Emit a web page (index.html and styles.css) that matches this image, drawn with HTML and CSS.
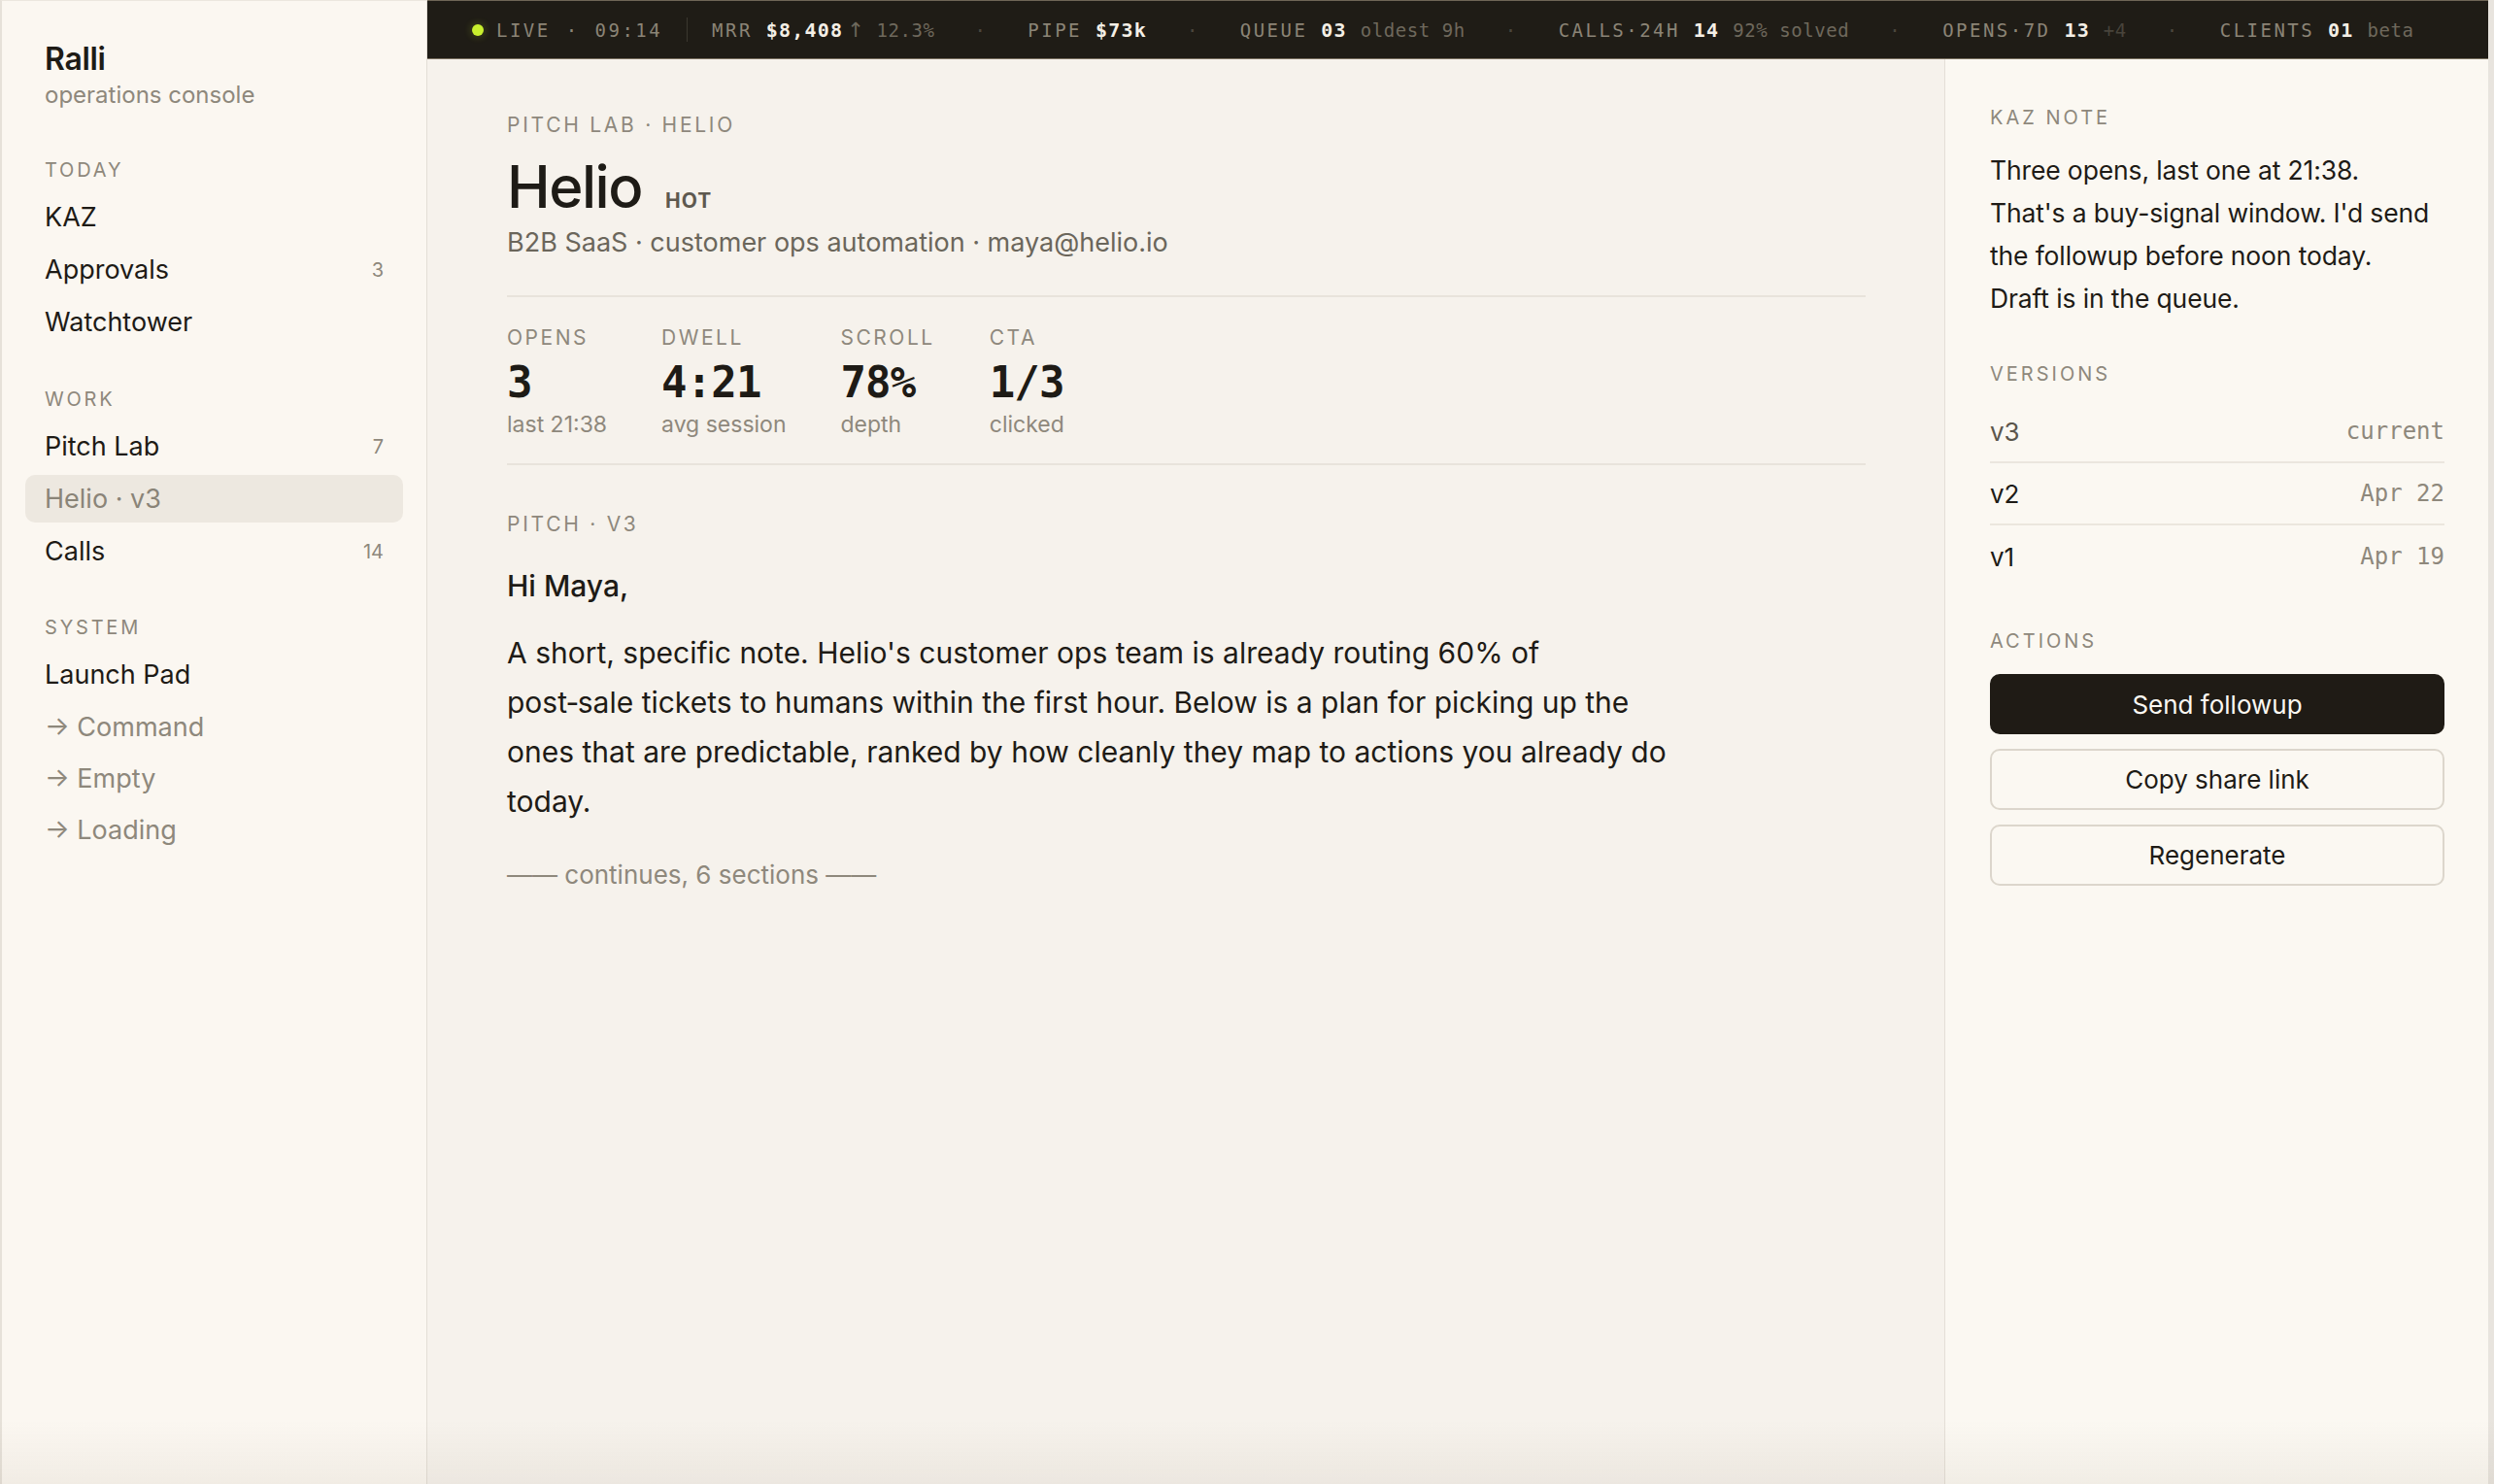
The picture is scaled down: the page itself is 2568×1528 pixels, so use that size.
FILE: index.html
```html
<!DOCTYPE html>
<html lang="en">
<head>
    <meta charset="UTF-8">
    <title>Ralli · Helio</title>
    <link rel="stylesheet" href="styles.css">
</head>
<body>
<aside class="sidebar">
    <div class="brand">
        <div class="brand_name">Ralli</div>
        <div class="brand_sub">operations console</div>
    </div>
    <div class="nav_group">
        <div class="nav_label">TODAY</div>
        <a href="###" class="nav_item"><span>KAZ</span></a>
        <a href="###" class="nav_item"><span>Approvals</span><span class="nav_count">3</span></a>
        <a href="###" class="nav_item"><span>Watchtower</span></a>
    </div>
    <div class="nav_group">
        <div class="nav_label">WORK</div>
        <a href="###" class="nav_item"><span>Pitch Lab</span><span class="nav_count">7</span></a>
        <a href="###" class="nav_item active"><span>Helio · v3</span></a>
        <a href="###" class="nav_item"><span>Calls</span><span class="nav_count">14</span></a>
    </div>
    <div class="nav_group">
        <div class="nav_label">SYSTEM</div>
        <a href="###" class="nav_item"><span>Launch Pad</span></a>
        <a href="###" class="nav_item sub"><span>→ Command</span></a>
        <a href="###" class="nav_item sub"><span>→ Empty</span></a>
        <a href="###" class="nav_item sub"><span>→ Loading</span></a>
    </div>
</aside>

<div class="workspace">
    <div class="ticker">
        <span class="tick_live"><i class="live_dot"></i>LIVE<span class="tick_mid">·</span>09:14</span>
        <span class="tick_rule"></span>
        <span class="tick">MRR <b>$8,408</b><em class="tick_up"><span class="arrow">↑</span> 12.3%</em></span>
        <span class="tick_sep">·</span>
        <span class="tick">PIPE <b>$73k</b></span>
        <span class="tick_sep">·</span>
        <span class="tick">QUEUE <b>03</b> <em>oldest 9h</em></span>
        <span class="tick_sep">·</span>
        <span class="tick">CALLS·24H <b>14</b> <em>92% solved</em></span>
        <span class="tick_sep">·</span>
        <span class="tick">OPENS·7D <b>13</b> <em class="tick_faint">+4</em></span>
        <span class="tick_sep">·</span>
        <span class="tick">CLIENTS <b>01</b> <em>beta</em></span>
    </div>

    <div class="panes">
        <main class="main">
            <div class="header">
                <div class="crumb">PITCH LAB · HELIO</div>
                <div class="title_row">
                    <h1>Helio</h1>
                    <span class="heat">HOT</span>
                </div>
                <div class="client_meta">B2B SaaS · customer ops automation · maya@helio.io</div>
            </div>

            <div class="metrics">
                <div class="metric">
                    <div class="metric_label">OPENS</div>
                    <div class="metric_value">3</div>
                    <div class="metric_note">last 21:38</div>
                </div>
                <div class="metric">
                    <div class="metric_label">DWELL</div>
                    <div class="metric_value">4:21</div>
                    <div class="metric_note">avg session</div>
                </div>
                <div class="metric">
                    <div class="metric_label">SCROLL</div>
                    <div class="metric_value">78%</div>
                    <div class="metric_note">depth</div>
                </div>
                <div class="metric">
                    <div class="metric_label">CTA</div>
                    <div class="metric_value">1/3</div>
                    <div class="metric_note">clicked</div>
                </div>
            </div>

            <div class="pitch">
                <div class="crumb">PITCH · V3</div>
                <p class="greeting">Hi Maya,</p>
                <p class="pitch_body">A short, specific note. Helio's customer ops team is already routing 60% of post&#8209;sale&nbsp;tickets to humans within the first hour. Below is a plan for picking up the ones that are predictable, ranked by how cleanly they map to actions you already do today.</p>
                <div class="more">—— continues, 6 sections ——</div>
            </div>
        </main>

        <aside class="aside">
            <div class="aside_label">KAZ NOTE</div>
            <p class="note">Three opens, last one at 21:38.<br>
                That's a buy-signal window. I'd send<br>
                the followup before noon today.<br>
                Draft is in the queue.</p>

            <div class="aside_label aside_gap">VERSIONS</div>
            <ul class="versions">
                <li class="version current"><span>v3</span><span class="version_date">current</span></li>
                <li class="version"><span>v2</span><span class="version_date">Apr 22</span></li>
                <li class="version"><span>v1</span><span class="version_date">Apr 19</span></li>
            </ul>

            <div class="aside_label aside_gap">ACTIONS</div>
            <div class="actions">
                <button class="btn btn_primary">Send followup</button>
                <button class="btn">Copy share link</button>
                <button class="btn">Regenerate</button>
            </div>
        </aside>
    </div>
</div>
</body>
</html>
```

FILE: styles.css
```css
*{
    padding:0;
    margin:0;
    box-sizing: border-box;
}
ul ,li {
    list-style: none;
}
a {
    text-decoration: none;
    color: inherit;
}
html, body {
    height: 100%;
}
body {
    display: flex;
    overflow: hidden;
    font-family: Inter, "Noto Sans", sans-serif;
    color: #1e1b16;
    background: #e8e4de;
    border-right: 6px solid #e8e4de;
}
/* soft shade along the bottom edge of the window */
body::after {
    content: "";
    position: fixed;
    left: 0;
    right: 0;
    bottom: 0;
    height: 66px;
    background: linear-gradient(rgba(90, 70, 40, 0), rgba(90, 70, 40, 0.06));
    pointer-events: none;
}

/* sidebar */
.sidebar {
    flex: none;
    width: 440px;
    padding: 41px 24px 0;
    background: #fbf7f1;
    border-left: 2px solid #e6e1d9;
    border-top: 1px solid #ece7df;
    border-right: 1px solid #e3ded6;
}
.brand {
    padding: 0 20px;
}
.brand_name {
    font-size: 32px;
    font-weight: 600;
    line-height: 38px;
    letter-spacing: -0.01em;
}
.brand_sub {
    margin-top: 3px;
    font-size: 24px;
    line-height: 30px;
    color: #8e887c;
}
.nav_group {
    margin-top: 43px;
}
.brand + .nav_group {
    margin-top: 50px;
}
.nav_group:last-child {
    margin-top: 42px;
}
.nav_label {
    padding: 0 20px;
    margin-bottom: 12px;
    font-size: 20px;
    line-height: 24px;
    letter-spacing: 0.14em;
    color: #8e887c;
}
.nav_item {
    display: flex;
    justify-content: space-between;
    align-items: center;
    height: 49px;
    padding: 0 20px;
    margin-bottom: 5px;
    border-radius: 10px;
    font-size: 27px;
}
.nav_item:last-child {
    margin-bottom: 0;
}
.nav_item.sub {
    margin-bottom: 4px;
    color: #8e887c;
}
.nav_item.active {
    background: #ede8e0;
    color: #8a8478;
}
.nav_count {
    font-size: 20px;
    color: #8e887c;
}

/* right side: ticker on top, panes below */
.workspace {
    flex: 1;
    min-width: 0;
    display: flex;
    flex-direction: column;
}
.ticker {
    flex: none;
    display: flex;
    align-items: center;
    gap: 25px;
    height: 61px;
    padding-left: 46px;
    background: #1f1c16;
    border-top: 1px solid #6f6656;
    border-bottom: 1px solid #7a705f;
    font-family: "DejaVu Sans Mono", "Liberation Mono", monospace;
    font-size: 19px;
    letter-spacing: 0.13em;
    color: #8b8476;
    white-space: nowrap;
}
.ticker b {
    font-weight: 700;
    font-size: 20px;
    color: #f4efe6;
    letter-spacing: 0.06em;
}
.ticker em {
    font-style: normal;
    letter-spacing: 0.03em;
    color: #6e685c;
}
.tick_live {
    display: flex;
    align-items: center;
}
.live_dot {
    width: 12px;
    height: 12px;
    margin-right: 13px;
    border-radius: 50%;
    background: #c8ef2e;
    box-shadow: 0 0 6px 3px rgba(200, 239, 46, 0.12);
}
.tick_mid {
    margin: 0 16px;
}
.tick_rule {
    width: 1px;
    height: 25px;
    background: #3b372f;
}
.tick_up {
    margin-left: 4px;
}
.tick_up .arrow {
    font-family: "DejaVu Sans", sans-serif;
    font-size: 21px;
}
.ticker .tick_faint {
    color: #48443b;
}
.tick_sep {
    margin: 0 16px;
    color: #4b463d;
}

.panes {
    flex: 1;
    min-height: 0;
    display: flex;
}

/* main column */
.main {
    flex: 1;
    min-width: 0;
    padding: 56px 81px 0 82px;
    background: #f6f2ec;
}
.crumb {
    font-size: 21px;
    line-height: 24px;
    letter-spacing: 0.13em;
    color: #8e887c;
}
.header {
    padding-bottom: 36px;
    border-bottom: 2px solid #e8e3db;
}
.title_row {
    display: flex;
    align-items: baseline;
    gap: 24px;
    margin-top: 15px;
}
.title_row h1 {
    font-size: 60px;
    font-weight: 500;
    line-height: 72px;
    letter-spacing: -0.025em;
}
.heat {
    font-size: 21px;
    font-weight: 700;
    letter-spacing: 0.05em;
    color: #5e594f;
}
.client_meta {
    margin-top: 4px;
    font-size: 27px;
    line-height: 36px;
    color: #6b665b;
}
.metrics {
    display: flex;
    gap: 56px;
    padding: 30px 0 26px;
    border-bottom: 2px solid #e8e3db;
}
.metric_label {
    font-size: 21px;
    line-height: 24px;
    letter-spacing: 0.12em;
    color: #8e887c;
}
.metric_value {
    margin-top: 8px;
    font-family: "DejaVu Sans Mono", "Liberation Mono", monospace;
    font-size: 44px;
    font-weight: 700;
    line-height: 52px;
    letter-spacing: -0.02em;
}
.metric_note {
    margin-top: 3px;
    font-size: 23px;
    line-height: 28px;
    color: #8e887c;
}
.pitch {
    padding-top: 49px;
}
.greeting {
    margin-top: 31px;
    font-size: 30px;
    font-weight: 500;
    line-height: 40px;
}
.pitch_body {
    max-width: 1215px;
    margin-top: 24px;
    font-size: 30px;
    line-height: 51px;
}
.more {
    margin-top: 34px;
    font-size: 26px;
    line-height: 32px;
    color: #8e887c;
}

/* right panel */
.aside {
    flex: none;
    width: 560px;
    padding: 48px 45px 0 46px;
    background: #fbf8f2;
    border-left: 1px solid #e4dfd7;
}
.aside_label {
    font-size: 20px;
    line-height: 24px;
    letter-spacing: 0.15em;
    color: #8e887c;
}
.aside_gap {
    margin-top: 44px;
}
.note {
    margin-top: 20px;
    font-size: 26.5px;
    line-height: 44px;
    letter-spacing: -0.005em;
    white-space: nowrap;
}
.versions {
    margin-top: 16px;
}
.version {
    display: flex;
    justify-content: space-between;
    align-items: center;
    height: 64px;
    border-bottom: 2px solid #ebe6de;
    font-size: 26px;
}
.version:last-child {
    border-bottom: none;
}
.version.current {
    color: #5b564c;
}
.version_date {
    font-family: "DejaVu Sans Mono", "Liberation Mono", monospace;
    font-size: 24px;
    color: #8e887c;
}
.versions + .aside_gap {
    margin-top: 43px;
}
.actions {
    display: flex;
    flex-direction: column;
    gap: 15px;
    margin-top: 22px;
}
.btn {
    height: 63px;
    border: 2px solid #dcd6cc;
    border-radius: 10px;
    background: transparent;
    font-family: inherit;
    font-size: 26px;
    color: #1e1b16;
    cursor: pointer;
}
.btn_primary {
    height: 62px;
    background: #1f1b15;
    border-color: #1f1b15;
    color: #fbf8f2;
}
```
